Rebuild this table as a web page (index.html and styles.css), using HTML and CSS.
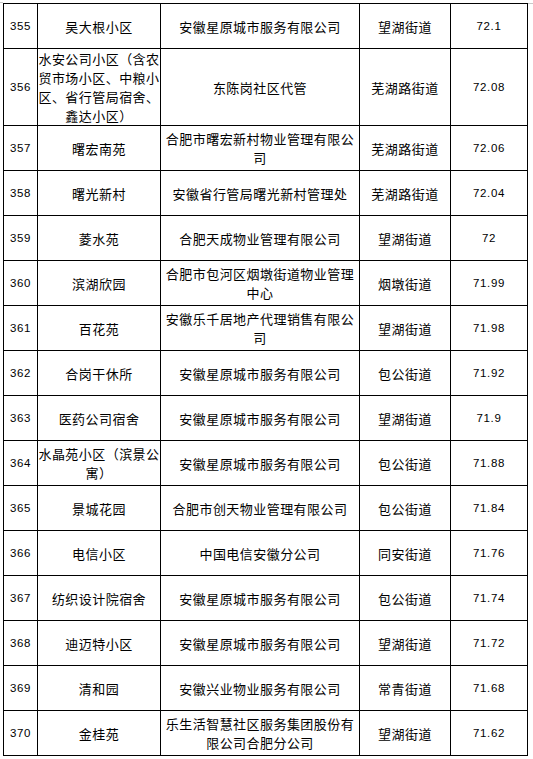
FILE: index.html
```html
<!DOCTYPE html>
<html lang="zh">
<head>
<meta charset="utf-8">
<link rel="stylesheet" href="styles.css">
</head>
<body>
<div class="page">
<span class="mark mark-tl"></span>
<span class="mark mark-tr"></span>
<table class="list">
<colgroup>
<col class="c-no"><col class="c-name"><col class="c-co"><col class="c-st"><col class="c-sc">
</colgroup>
<tbody>
<tr><td class="num">355</td><td>吴大根小区</td><td>安徽星原城市服务有限公司</td><td>望湖街道</td><td class="num">72.1</td></tr>
<tr class="tall"><td class="num">356</td><td>水安公司小区（含农贸市场小区、中粮小区、省行管局宿舍、鑫达小区）</td><td>东陈岗社区代管</td><td>芜湖路街道</td><td class="num">72.08</td></tr>
<tr><td class="num">357</td><td>曙宏南苑</td><td>合肥市曙宏新村物业管理有限公司</td><td>芜湖路街道</td><td class="num">72.06</td></tr>
<tr><td class="num">358</td><td>曙光新村</td><td>安徽省行管局曙光新村管理处</td><td>芜湖路街道</td><td class="num">72.04</td></tr>
<tr><td class="num">359</td><td>菱水苑</td><td>合肥天成物业管理有限公司</td><td>望湖街道</td><td class="num">72</td></tr>
<tr><td class="num">360</td><td>滨湖欣园</td><td>合肥市包河区烟墩街道物业管理中心</td><td>烟墩街道</td><td class="num">71.99</td></tr>
<tr><td class="num">361</td><td>百花苑</td><td>安徽乐千居地产代理销售有限公司</td><td>望湖街道</td><td class="num">71.98</td></tr>
<tr><td class="num">362</td><td>合岗干休所</td><td>安徽星原城市服务有限公司</td><td>包公街道</td><td class="num">71.92</td></tr>
<tr><td class="num">363</td><td>医药公司宿舍</td><td>安徽星原城市服务有限公司</td><td>望湖街道</td><td class="num">71.9</td></tr>
<tr><td class="num">364</td><td>水晶苑小区（滨景公寓）</td><td>安徽星原城市服务有限公司</td><td>包公街道</td><td class="num">71.88</td></tr>
<tr><td class="num">365</td><td>景城花园</td><td>合肥市创天物业管理有限公司</td><td>包公街道</td><td class="num">71.84</td></tr>
<tr><td class="num">366</td><td>电信小区</td><td>中国电信安徽分公司</td><td>同安街道</td><td class="num">71.76</td></tr>
<tr><td class="num">367</td><td>纺织设计院宿舍</td><td>安徽星原城市服务有限公司</td><td>包公街道</td><td class="num">71.74</td></tr>
<tr><td class="num">368</td><td>迪迈特小区</td><td>安徽星原城市服务有限公司</td><td>望湖街道</td><td class="num">71.72</td></tr>
<tr><td class="num">369</td><td>清和园</td><td>安徽兴业物业服务有限公司</td><td>常青街道</td><td class="num">71.68</td></tr>
<tr><td class="num">370</td><td>金桂苑</td><td>乐生活智慧社区服务集团股份有限公司合肥分公司</td><td>望湖街道</td><td class="num">71.62</td></tr>
</tbody>
</table>
</div>
</body>
</html>
```
FILE: styles.css
```css
html, body {
  margin: 0;
  padding: 0;
  background: #ffffff;
}
.page {
  position: relative;
  width: 533px;
  height: 759px;
  padding: 3px 0 0 3px;
  box-sizing: border-box;
}
.mark {
  position: absolute;
  background: #c8c8c8;
}
.mark-tl {
  left: 0;
  top: 2px;
  width: 3px;
  height: 1px;
}
.mark-tr {
  left: 528px;
  top: 3px;
  width: 5px;
  height: 1px;
}
.list {
  border-collapse: collapse;
  table-layout: fixed;
  width: 524px;
  font-family: "Noto Sans CJK SC", sans-serif;
  font-size: 13px;
  letter-spacing: 0.45px;
  line-height: 19px;
  color: #000;
}
.c-no { width: 34px; }
.c-name { width: 123px; }
.c-co { width: 199px; }
.c-st { width: 91px; }
.c-sc { width: 77px; }
.list td {
  border: 1px solid #000;
  padding: 0;
  text-align: center;
  vertical-align: middle;
  height: 45px;
  box-sizing: border-box;
}
.list tr.tall td {
  height: 75px;
}
.list td.num {
  font-family: "Liberation Sans", sans-serif;
  font-size: 11.5px;
  letter-spacing: 0.6px;
}
```
